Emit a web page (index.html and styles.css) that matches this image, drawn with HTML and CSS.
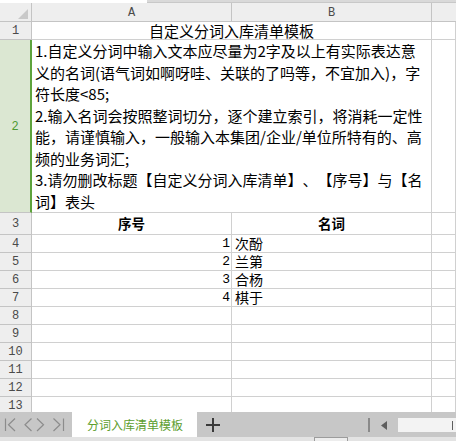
FILE: index.html
```html
<!DOCTYPE html>
<html lang="zh-CN">
<head>
<meta charset="utf-8">
<title>分词入库清单模板</title>
<link rel="stylesheet" href="styles.css">
</head>
<body>
<div class="app">
  <div class="topstrip"><div class="ts-left"></div><div class="ts-right"></div></div>

  <div class="sheet">
    <div class="grid">
      <div class="corner"><div class="corner-tri"></div></div>
      <div class="colhead">A</div>
      <div class="colhead">B</div>
      <div class="colhead colhead-last"></div>

      <div class="rowhead">1</div>
      <div class="cell span2 title">自定义分词入库清单模板</div>
      <div class="cell"></div>

      <div class="rowhead rowhead-active">2</div>
      <div class="cell span2 notes">1.自定义分词中输入文本应尽量为2字及以上有实际表达意<br>义的名词(语气词如啊呀哇、关联的了吗等，不宜加入)，字<br>符长度&lt;85;<br>2.输入名词会按照整词切分，逐个建立索引，将消耗一定性<br>能，请谨慎输入，一般输入本集团/企业/单位所特有的、高<br>频的业务词汇;<br>3.请勿删改标题【自定义分词入库清单】、【序号】与【名<br>词】表头</div>
      <div class="cell"></div>

      <div class="rowhead">3</div>
      <div class="cell th">序号</div>
      <div class="cell th">名词</div>
      <div class="cell"></div>

      <div class="rowhead">4</div>
      <div class="cell num">1</div>
      <div class="cell word">次酚</div>
      <div class="cell"></div>

      <div class="rowhead">5</div>
      <div class="cell num">2</div>
      <div class="cell word">兰第</div>
      <div class="cell"></div>

      <div class="rowhead">6</div>
      <div class="cell num">3</div>
      <div class="cell word">合杨</div>
      <div class="cell"></div>

      <div class="rowhead">7</div>
      <div class="cell num">4</div>
      <div class="cell word">棋于</div>
      <div class="cell"></div>

      <div class="rowhead">8</div><div class="cell"></div><div class="cell"></div><div class="cell"></div>
      <div class="rowhead">9</div><div class="cell"></div><div class="cell"></div><div class="cell"></div>
      <div class="rowhead">10</div><div class="cell"></div><div class="cell"></div><div class="cell"></div>
      <div class="rowhead">11</div><div class="cell"></div><div class="cell"></div><div class="cell"></div>
      <div class="rowhead">12</div><div class="cell"></div><div class="cell"></div><div class="cell"></div>
      <div class="rowhead">13</div><div class="cell"></div><div class="cell"></div><div class="cell"></div>
    </div>
  </div>

  <div class="tabbar">
    <div class="tabnav">
      <svg width="72" height="25" viewBox="0 0 72 25" fill="none" stroke="#8c8c8c" stroke-width="1.2">
        <line x1="5.5" y1="6.5" x2="5.5" y2="19"/>
        <polyline points="15,6.5 8.5,12.8 15,19"/>
        <polyline points="31.5,6.5 25,12.8 31.5,19"/>
        <polyline points="37,6.5 43.5,12.8 37,19"/>
        <polyline points="53.5,6.5 60,12.8 53.5,19"/>
        <line x1="63.5" y1="6.5" x2="63.5" y2="19"/>
      </svg>
    </div>
    <div class="tab-active">分词入库清单模板</div>
    <div class="tab-add">
      <svg width="14" height="14" viewBox="0 0 14 14" stroke="#3a3a3a" stroke-width="2">
        <line x1="0" y1="7" x2="14" y2="7"/>
        <line x1="7" y1="0" x2="7" y2="14"/>
      </svg>
    </div>
    <div class="tab-fill"></div>
    <div class="hsep"></div>
    <div class="hleft">
      <svg width="6" height="9" viewBox="0 0 6 9"><polygon points="6,0 6,9 0,4.5" fill="#5e5e5e"/></svg>
    </div>
    <div class="hscroll"><div class="hscroll-mark"></div></div>
  </div>

  <div class="bottomstrip"><div class="bs-thumb"></div></div>
</div>
</body>
</html>
```

FILE: styles.css
```css
* {
  box-sizing: border-box;
}

html, body {
  margin: 0;
  padding: 0;
  background: #ffffff;
}

.app {
  width: 456px;
  height: 441px;
  display: flex;
  flex-direction: column;
  overflow: hidden;
  font-family: "Noto Sans CJK SC", "Noto Sans", sans-serif;
  color: #000;
  text-spacing-trim: space-all;
}

/* thin strip left over from the formula bar above the sheet */
.topstrip {
  height: 3px;
  display: flex;
}
.ts-left {
  width: 147px;
  background: #ffffff;
}
.ts-right {
  flex: 1;
  background: #d9d9d9;
  border-bottom: 1px solid #c8c8c8;
}

.sheet {
  flex: 1;
  overflow: hidden;
}

.grid {
  display: grid;
  grid-template-columns: 32px 200px 200px 1fr;
  grid-template-rows: 19px 18px 173px 22px repeat(10, 18px);
}

.corner,
.colhead,
.rowhead {
  background: #eeeeee;
  border-right: 1px solid #c4c4c4;
  border-bottom: 1px solid #c4c4c4;
  color: #4a4a4a;
  font-family: "Liberation Mono", "DejaVu Sans Mono", monospace;
  font-size: 12px;
}

.corner {
  display: flex;
  justify-content: flex-end;
  align-items: flex-end;
  padding: 0 3px 2px 0;
}
.corner-tri {
  width: 10px;
  height: 10px;
  background: #c9c9c9;
  clip-path: polygon(100% 0, 100% 100%, 0 100%);
}

.colhead {
  display: flex;
  align-items: center;
  justify-content: center;
  padding-top: 1px;
}
.colhead-last {
  border-right: none;
}

.rowhead {
  display: flex;
  align-items: center;
  justify-content: center;
  padding-top: 1px;
}
.rowhead-active {
  background: #dbe7d2;
  color: #4f9a34;
  border-right: 2px solid #5ea33c;
}

.cell {
  border-right: 1px solid #d0d0d0;
  border-bottom: 1px solid #d0d0d0;
  background: #ffffff;
  white-space: nowrap;
}

.span2 {
  grid-column: span 2;
}

.title {
  font-size: 15px;
  line-height: 17px;
  text-align: center;
}

.notes {
  font-size: 15px;
  line-height: 21.5px;
  padding: 0 0 0 3px;
}

.th {
  font-size: 13.5px;
  font-weight: 700;
  line-height: 21px;
  text-align: center;
}

.num {
  font-family: "Liberation Mono", "DejaVu Sans Mono", monospace;
  font-size: 13px;
  line-height: 17px;
  text-align: right;
  padding-right: 1px;
}

.word {
  font-size: 14px;
  line-height: 17px;
  padding-left: 3px;
}

/* sheet tab bar */
.tabbar {
  height: 25px;
  display: flex;
  align-items: stretch;
  background: #c7c7c7;
}
.tabnav {
  width: 72px;
  display: flex;
}
.tab-active {
  width: 125px;
  background: #ffffff;
  color: #5c9e2e;
  font-size: 12px;
  display: flex;
  align-items: center;
  justify-content: center;
  padding-left: 1px;
}
.tab-add {
  width: 31px;
  display: flex;
  align-items: center;
  justify-content: center;
  padding-top: 1px;
}
.tab-fill {
  flex: 1;
}
.hsep {
  width: 2px;
  margin: 6px 0 5px;
  background: #8a8a8a;
}
.hleft {
  width: 28px;
  display: flex;
  align-items: center;
  justify-content: center;
  padding-top: 1px;
}
.hscroll {
  width: 58px;
  margin: 6px 0 5px;
  background: #f3f3f3;
  display: flex;
  justify-content: flex-end;
  align-items: center;
  padding-right: 3px;
}
.hscroll-mark {
  width: 1px;
  height: 9px;
  background: #5e5e5e;
}

.bottomstrip {
  height: 4px;
  background: #e3e3e3;
  display: flex;
  padding-left: 314px;
}
.bs-thumb {
  width: 34px;
  border: 1px solid #9c9c9c;
  border-bottom: none;
  background: #ededed;
}
```
